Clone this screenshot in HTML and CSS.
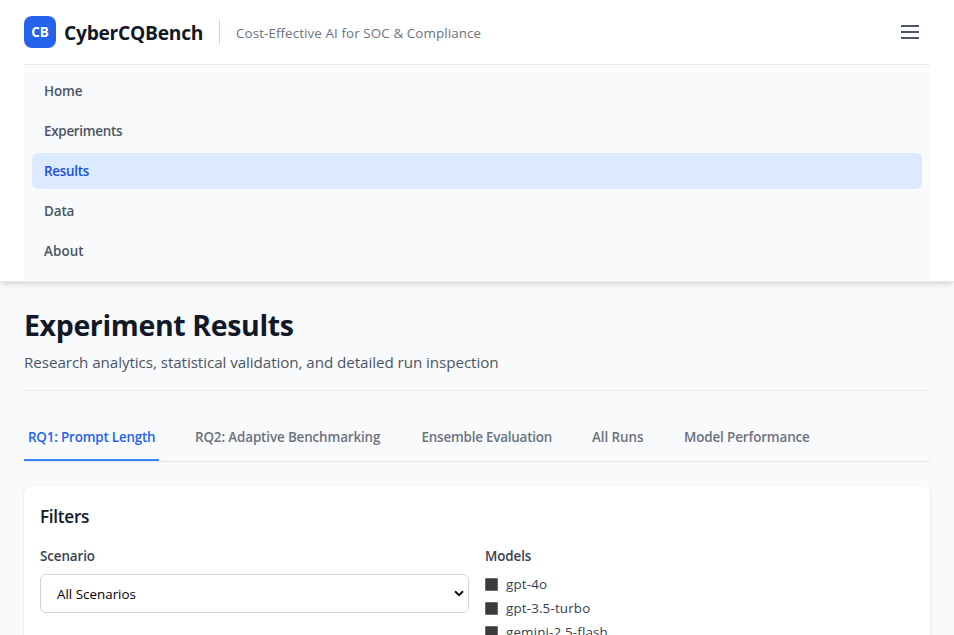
FILE: index.html
```html
<!DOCTYPE html>
<html lang="en">
<head>
<meta charset="utf-8">
<title>CyberCQBench</title>
<link rel="stylesheet" href="styles.css">
</head>
<body>
<header class="header">
  <div class="topbar">
    <div class="logo">CB</div>
    <span class="brand">CyberCQBench</span>
    <span class="tagline">Cost-Effective AI for SOC &amp; Compliance</span>
    <button class="menu-button" aria-label="Menu">
      <svg width="24" height="24" viewBox="0 0 24 24" fill="none" stroke="currentColor" stroke-width="2"><path d="M3 6h18M3 12h18M3 18h18"/></svg>
    </button>
  </div>
  <nav class="menu">
    <a class="menu-item">Home</a>
    <a class="menu-item">Experiments</a>
    <a class="menu-item active">Results</a>
    <a class="menu-item">Data</a>
    <a class="menu-item">About</a>
  </nav>
</header>
<main class="main">
  <div class="page-head">
    <h1 class="title">Experiment Results</h1>
    <p class="subtitle">Research analytics, statistical validation, and detailed run inspection</p>
  </div>
  <div class="tabs">
    <a class="tab active">RQ1: Prompt Length</a>
    <a class="tab">RQ2: Adaptive Benchmarking</a>
    <a class="tab">Ensemble Evaluation</a>
    <a class="tab">All Runs</a>
    <a class="tab">Model Performance</a>
  </div>
  <section class="card">
    <h2 class="card-title">Filters</h2>
    <div class="filters">
      <div>
        <div class="label">Scenario</div>
        <div class="select"><span>All Scenarios</span>
          <svg width="10" height="7" viewBox="0 0 10 7" fill="none" stroke="#101010" stroke-width="2"><path d="M1 1.2 5 5.2 9 1.2"/></svg>
        </div>
      </div>
      <div>
        <div class="label">Models</div>
        <div class="option"><i class="box"></i>gpt-4o</div>
        <div class="option"><i class="box"></i>gpt-3.5-turbo</div>
        <div class="option"><i class="box"></i>gemini-2.5-flash</div>
      </div>
    </div>
  </section>
</main>
</body>
</html>
```
FILE: styles.css
```css
* { box-sizing: border-box; }
html { height: 100%; overflow: hidden; }
body {
  margin: 0;
  height: 635px;
  overflow: hidden;
  background: #f9fafb;
  color: #111827;
  font: 400 13.4px/20px "Open Sans", "Noto Sans", sans-serif;
}
.header {
  position: relative;
  height: 282px;
  padding: 0 24px;
  background: #fff;
  border-bottom: 1px solid #e5e7eb;
  box-shadow: 0 4px 6px -1px rgba(0,0,0,.1), 0 2px 4px -2px rgba(0,0,0,.1);
}
.topbar { display: flex; align-items: center; height: 64px; }
.logo {
  width: 32px; height: 32px; border-radius: 8px;
  display: flex; align-items: center; justify-content: center;
  background: #2563eb; color: #fff; font-size: 13.5px; font-weight: 700; letter-spacing: -.2px;
}
.brand { margin-left: 8px; width: 139px; font-size: 19.2px; line-height: 28px; font-weight: 700; letter-spacing: -.25px; padding-top: 1px; }
.tagline {
  margin-left: 16px; padding: 3px 0 1px 16px; height: 24px; letter-spacing: .09px;
  border-left: 1px solid #d1d5db; color: #6b7280;
}
.menu-button { margin-left: auto; padding: 8px; border: 0; background: none; color: #4b5563; line-height: 0; }
.menu { height: 217px; padding: 8px; border-top: 1px solid #e5e7eb; background: #f9fafb; display: flex; flex-direction: column; gap: 4px; }
.menu-item { height: 36px; padding: 8px 12px; border-radius: 6px; color: #4b5563; font-weight: 600; letter-spacing: -.1px; }
.menu-item:nth-child(2) { letter-spacing: -.27px; }
.menu-item:nth-child(3) { letter-spacing: -.25px; }
.menu-item:nth-child(5) { letter-spacing: .1px; }
.menu-item.active { background: #dbeafe; color: #1d4ed8; }
.main { height: 353px; overflow: hidden; padding: 24px 24px 0; }
.page-head { height: 85px; border-bottom: 1px solid #e5e7eb; }
.title { margin: 0; font-size: 28.5px; line-height: 38px; font-weight: 700; letter-spacing: -.36px; }
.subtitle { margin: 6px 0 0; font-size: 15.2px; line-height: 24px; letter-spacing: -.07px; color: #4b5563; }
.tabs { display: flex; gap: 32px; height: 47px; margin-top: 24px; border-bottom: 1px solid #e5e7eb; }
.tab { height: 46px; padding: 12px 4px; border-bottom: 2px solid transparent; color: #6b7280; font-weight: 600; letter-spacing: -.12px; white-space: nowrap; }
.tab.active { border-color: #3b82f6; color: #2563eb; }
.tab:nth-child(1) { width: 135px; letter-spacing: -.18px; }
.tab:nth-child(2) { width: 194.5px; }
.tab:nth-child(3) { width: 138.5px; letter-spacing: -.2px; }
.tab:nth-child(4) { width: 60px; letter-spacing: -.05px; }
.card { height: 240px; margin-top: 24px; padding: 16px; background: #fff; border-radius: 8px; box-shadow: 0 1px 3px rgba(0,0,0,.1), 0 1px 2px -1px rgba(0,0,0,.1); }
.card-title { margin: 0 0 16px; padding-top: 1px; height: 28px; font-size: 17.2px; line-height: 28px; font-weight: 600; letter-spacing: -.3px; }
.filters { display: grid; grid-template-columns: 1fr 1fr; gap: 16px; }
.label { height: 28px; color: #374151; font-weight: 600; letter-spacing: -.1px; }
.select { display: flex; align-items: center; justify-content: space-between; height: 39px; padding: 0 4px 0 16px; border: 1px solid #d1d5db; border-radius: 6px; color: #000; }
.option { display: flex; align-items: center; height: 20px; margin-bottom: 4px; color: #374151; letter-spacing: .15px; }
.box { width: 13px; height: 13px; margin-right: 8px; background: #3b3b3b; border: 1px solid #6b6b6b; border-radius: 1px; }
```
